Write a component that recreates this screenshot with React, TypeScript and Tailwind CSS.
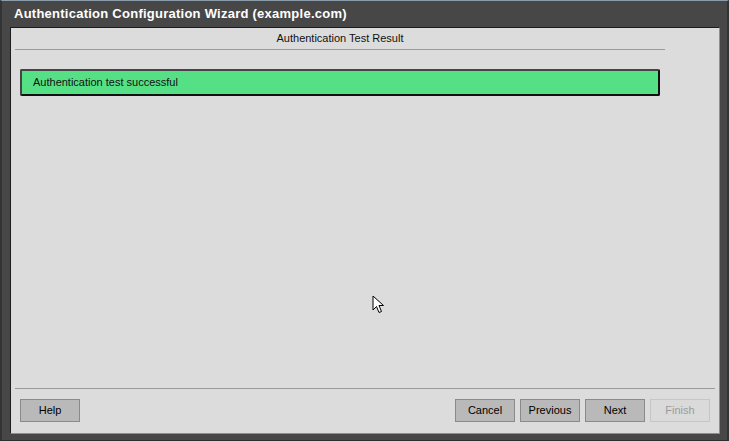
import React from 'react';

const font = { fontFamily: '"Liberation Sans", Arial, sans-serif' };

function Button({ label, disabled }: { label: string; disabled?: boolean }) {
  return (
    <button
      className={
        disabled
          ? 'w-[60px] h-[23px] text-[11px] border border-[#c6c6c6] bg-[#dadada] text-[#9a9a9a]'
          : 'w-[60px] h-[23px] text-[11px] border border-[#8a8a8a] bg-[#b9b9b9] text-black'
      }
    >
      {label}
    </button>
  );
}

export default function App() {
  return (
    <div
      className="relative w-[729px] h-[441px] bg-[#474747] border-t border-t-[#8c9cab] border-l-2 border-l-[#333] border-r-2 border-r-[#333] border-b border-b-[#2e2e2e] flex flex-col"
      style={font}
    >
      <div className="h-[26px] pl-[12px] flex items-center text-white font-bold text-[13px] tracking-[0.25px]">
        Authentication Configuration Wizard (example.com)
      </div>

      <div className="flex-1 ml-[8px] mr-[7px] mb-[6px] bg-[#dcdcdc] border-t border-l border-t-[#1c1c1c] border-l-[#1c1c1c] border-b border-r border-b-[#8e8e8e] border-r-[#8e8e8e] flex flex-col">
        <div className="pl-[4px] pr-[54px]">
          <div className="h-[22px] flex items-end justify-center pb-[3px] text-[11px] text-[#111] border-b border-[#9a9a9a]">
            Authentication Test Result
          </div>
        </div>

        <div className="pl-[9px] pr-[59px] pt-[19px]">
          <div className="h-[27px] flex items-center pl-[11px] bg-[#55e085] border-2 border-t-[#444] border-l-[#444] border-b-[#111] border-r-[#111] rounded-[2px] text-[11px] text-[#111]">
            Authentication test successful
          </div>
        </div>

        <div className="flex-1" />

        <div className="mx-[4px] border-t border-[#9a9a9a]" />
        <div className="h-[44px] flex items-center justify-between pl-[9px] pr-[9px] pb-[1px]">
          <Button label="Help" />
          <div className="flex gap-[5px]">
            <Button label="Cancel" />
            <Button label="Previous" />
            <Button label="Next" />
            <Button label="Finish" disabled />
          </div>
        </div>
      </div>

      <svg
        className="absolute left-[370px] top-[294px]"
        width="14"
        height="20"
        viewBox="0 0 14 20"
      >
        <path
          d="M1 1 L1 15 L4.5 11.5 L7 17.5 L9.5 16.5 L7 10.5 L11.5 10.5 Z"
          fill="#fff"
          stroke="#000"
          strokeWidth="1"
          strokeLinejoin="miter"
        />
      </svg>
    </div>
  );
}
